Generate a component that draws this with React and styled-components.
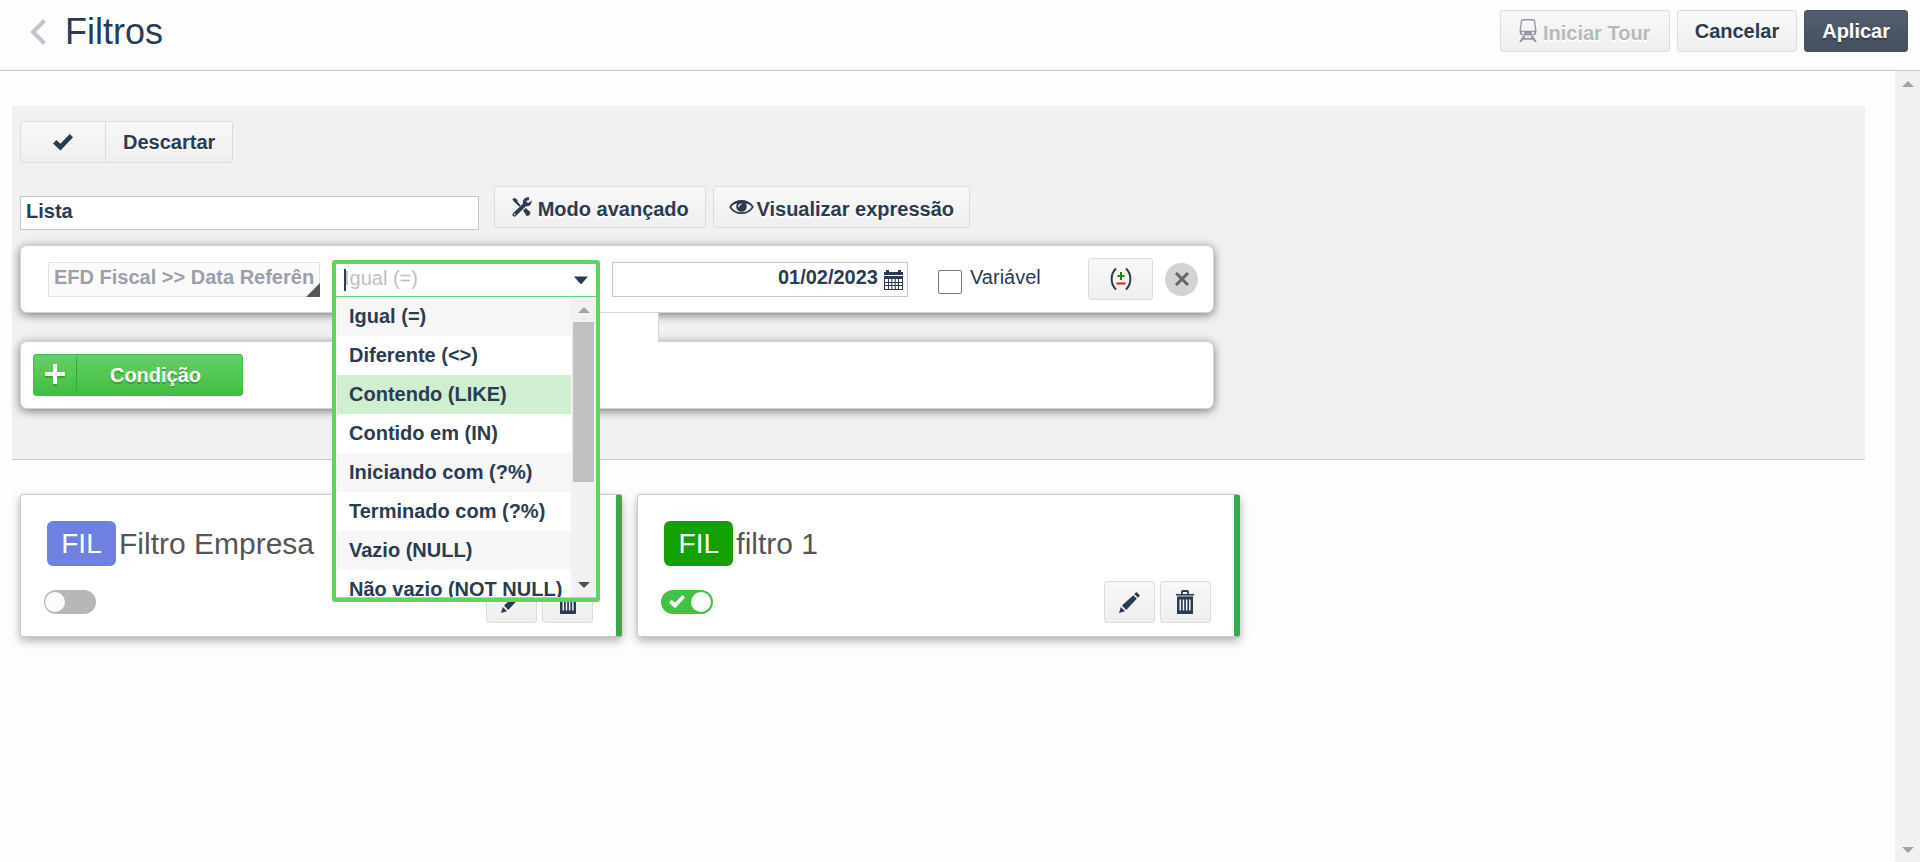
import React from 'react';
import styled, { createGlobalStyle, css } from 'styled-components';

const ink = '#2b3b50';
const green = '#66cf66';

const GlobalStyle = createGlobalStyle`
  *, *::before, *::after { box-sizing: border-box; }
  body { margin: 0; background: #fdfdfd; }
  body, button, input { font-family: "Liberation Sans", Arial, sans-serif; color: ${ink}; }
  svg { display: block; flex: none; }
`;

const Page = styled.div`
  display: flex;
  flex-direction: column;
  min-height: 100vh;
  font-size: 20px;
`;

const Header = styled.header`
  display: flex;
  align-items: flex-start;
  padding: 10px 12px 0 30px;
  height: 71px;
  border-bottom: 1px solid #c6c6c6;
`;

const BackLink = styled.a`
  padding-top: 9px;
  margin-right: 19px;
`;

const Title = styled.h1`
  margin: 0;
  font-size: 36px;
  font-weight: 400;
  line-height: 44px;
`;

const Actions = styled.div`
  display: flex;
  gap: 7px;
  margin-left: auto;
`;

const Button = styled.button`
  display: flex;
  align-items: center;
  justify-content: center;
  height: 42px;
  padding: 0 ${(p) => (p.$width ? '0' : '17px')};
  width: ${(p) => p.$width || 'auto'};
  border: 1px solid #dcdcdc;
  border-radius: 3px;
  background: linear-gradient(#f8f8f8, #efefef);
  font-size: 20px;
  font-weight: 700;
  line-height: 24px;
  white-space: nowrap;
  text-shadow: 0 2px 0 #fff;
  &:disabled { color: #b9b9bb; }
  ${(p) => p.$primary && css`
    border-color: #455161;
    background: linear-gradient(#525e70, #44505e);
    color: #fff;
    text-shadow: 0 2px 0 #333d4a;
  `}
`;

const IconLabel = styled.span`
  padding-top: 3px;
  margin-left: ${(p) => (p.$tight ? '2px' : '6px')};
`;

const Body = styled.div`
  display: flex;
  flex: 1;
`;

const Main = styled.main`
  flex: 1;
  min-width: 0;
  padding: 35px 30px 40px 12px;
`;

const Panel = styled.section`
  padding: 15px 8px 50px;
  background: #f1f1f1;
  border-bottom: 1px solid #c6c6c6;
`;

const ButtonGroup = styled.div`
  display: flex;
  & > button:first-child { border-radius: 3px 0 0 3px; }
  & > button + button { margin-left: -1px; border-radius: 0 3px 3px 0; }
`;

const NameRow = styled.div`
  display: flex;
  gap: 7px;
  height: 44px;
  margin: 23px 0 15px;
`;

const NameInput = styled.input`
  align-self: flex-end;
  width: 25%;
  height: 34px;
  margin-right: 8px;
  padding: 0 5px 4px;
  border: 1px solid #c6c6c6;
  background: #fff;
  font-size: 20px;
  font-weight: 700;
`;

const Condition = styled.div`
  display: flex;
  align-items: center;
  width: 65%;
  height: 68px;
  margin-bottom: ${(p) => (p.$last ? '0' : '28px')};
  padding: 0 15px 0 ${(p) => (p.$last ? '12px' : '27px')};
  border: 1px solid #d4d4d4;
  border-radius: 7px;
  background: #fff;
  box-shadow: 0 2px 10px rgba(0, 0, 0, 0.5);
`;

const Field = styled.div`
  position: relative;
  flex: 0 1 ${(p) => p.$basis};
  min-width: 0;
  height: 35px;
  margin-right: 12px;
`;

const FieldInput = styled.input`
  width: 100%;
  height: 35px;
  padding: 0 5px 3px;
  border: 1px solid #c6c6c6;
  background: #fff;
  font-size: 20px;
  font-weight: 700;
  text-align: ${(p) => (p.$date ? 'right' : 'left')};
  ${(p) => p.$date && css`padding-right: 29px;`}
  &:disabled {
    border-color: #e2e2e2;
    background: #fafafa;
    color: #9a9fab;
  }
`;

const Corner = styled.span`
  position: absolute;
  right: 0;
  bottom: 0;
  border: 7px solid transparent;
  border-right-color: #555;
  border-bottom-color: #555;
`;

const CalendarMark = styled.span`
  position: absolute;
  right: 5px;
  top: 8px;
`;

const Backdrop = styled.div`
  position: absolute;
  top: 51px;
  left: 0;
  width: 327px;
  height: 30px;
  border-right: 1px solid #d4d4d4;
  background: #fff;
  z-index: 1;
`;

const Combo = styled.div`
  position: absolute;
  top: -2px;
  left: 0;
  right: 0;
  z-index: 2;
  border: 4px solid ${green};
  border-radius: 3px;
  background: #fff;
`;

const ComboHead = styled.div`
  display: flex;
  align-items: center;
  height: 33px;
  padding-right: 8px;
  border-bottom: 1px solid ${green};
`;

const Caret = styled.span`
  position: absolute;
  left: 8px;
  top: 5px;
  width: 2px;
  height: 22px;
  background: ${ink};
`;

const ComboInput = styled.input`
  flex: 1;
  min-width: 0;
  height: 32px;
  padding: 0 8px 2px;
  border: 0;
  outline: 0;
  background: transparent;
  font-size: 20px;
  &::placeholder { color: #bfbfbf; opacity: 1; }
`;

const ComboBody = styled.div`
  display: flex;
  height: 301px;
  border-bottom: 1px solid #c6c6c6;
`;

const Options = styled.ul`
  flex: 1;
  margin: 0;
  padding: 0 0 0 1px;
  list-style: none;
  overflow: hidden;
`;

const Option = styled.li`
  height: 39px;
  padding: 0 12px;
  background: ${(p) => (p.$active ? '#d0efd0' : '#fff')};
  font-weight: 700;
  line-height: 38px;
  white-space: nowrap;
  &:nth-child(4n + 1) { background: #f6f6f6; }
  &:nth-child(7) { background: #f6f6f6; }
`;

const Track = styled.div`
  display: flex;
  flex: none;
  flex-direction: column;
  align-items: center;
  width: 25px;
  background: #f1f1f1;
`;

const Arrow = styled.span`
  width: 0;
  margin: 10px 0 9px;
  border: 0 solid transparent;
  border-width: 0 6px;
  ${(p) => (p.$down
    ? css`border-top: 6px solid ${p.$color}; margin-top: auto;`
    : css`border-bottom: 6px solid ${p.$color};`)}
`;

const Thumb = styled.span`
  width: 21px;
  height: 160px;
  background: #c1c1c1;
`;

const CheckLabel = styled.label`
  display: flex;
  align-items: flex-start;
  gap: 8px;
  margin-left: 18px;
  line-height: 24px;
`;

const Checkbox = styled.input`
  appearance: none;
  width: 24px;
  height: 24px;
  margin: 5px 0 0;
  border: 1px solid #777;
  border-radius: 2px;
  background: #fff;
`;

const RowTools = styled.div`
  display: flex;
  align-items: center;
  gap: 12px;
  margin-left: auto;
`;

const CloseButton = styled.button`
  display: grid;
  place-items: center;
  width: 33px;
  height: 33px;
  padding: 0;
  border: 0;
  border-radius: 50%;
  background: #d3d3d3;
`;

const AddButton = styled.button`
  display: flex;
  align-items: center;
  width: 210px;
  height: 42px;
  padding: 0;
  border: 1px solid #45bb45;
  border-radius: 3px;
  background: linear-gradient(${green}, #40bf40);
  color: #fff;
  font-size: 20px;
  font-weight: 700;
  text-shadow: 0 2px 0 #36a336;
`;

const AddIcon = styled.span`
  display: grid;
  place-items: center;
  width: 43px;
  height: 36px;
  border-right: 1px solid #36a936;
`;

const AddText = styled.span`
  flex: 1;
  padding-right: 8px;
  text-align: center;
`;

const CardGrid = styled.section`
  display: grid;
  grid-template-columns: repeat(3, 1fr);
  gap: 15px;
  padding: 34px 8px 0;
`;

const Card = styled.article`
  display: flex;
  flex-direction: column;
  justify-content: space-between;
  height: 143px;
  padding: 26px 23px 13px 23px;
  border: 1px solid #c9c9c9;
  border-right: 6px solid #37ab49;
  border-radius: 3px;
  background: #fff;
  box-shadow: 0 4px 10px rgba(0, 0, 0, 0.3);
`;

const CardTitle = styled.h2`
  display: flex;
  align-items: center;
  gap: 3px;
  margin: 0 0 0 3px;
  color: #555;
  font-size: 30px;
  font-weight: 400;
`;

const Badge = styled.span`
  width: 69px;
  border-radius: 6px;
  background: ${(p) => p.$color};
  color: #fff;
  font-size: 28px;
  line-height: 45px;
  text-align: center;
`;

const CardFoot = styled.div`
  display: flex;
  align-items: center;
  gap: 5px;
`;

const Switch = styled.label`
  position: relative;
  display: flex;
  align-items: center;
  justify-content: ${(p) => (p.$on ? 'flex-end' : 'flex-start')};
  gap: 6px;
  width: 52px;
  height: 24px;
  margin-right: auto;
  padding: 0 2px 0 1px;
  border-radius: 12px;
  background: ${(p) => (p.$on ? '#43c143' : '#b7b7b7')};
`;

const SwitchInput = styled.input`
  position: absolute;
  inset: 0;
  width: 100%;
  height: 100%;
  margin: 0;
  opacity: 0;
`;

const Knob = styled.span`
  width: 20px;
  height: 20px;
  border-radius: 50%;
  background: #fcfcfc;
`;

const ChevronIcon = () => (
  <svg width="16" height="26" viewBox="0 0 16 26" fill="none" stroke="#c1c2cc" strokeWidth="4">
    <path d="M14.5 1.5 3 13l11.500 11.500" />
  </svg>
);

const TrainIcon = () => (
  <svg width="18" height="24" viewBox="0 0 18 24" fill="#9298a5">
    <path fillRule="evenodd" d="M4 0h10c1.500 0 2 .8 2.200 2L17.500 12c.2 3-1.500 4.500-3.500 4.500H4C2 16.500.3 15 .5 12L1.800 2C2 .8 2.500 0 4 0ZM4 1.500c-.5 0-.8.3-.9.800L2 10.500c0 .8.300 1.200 1 1.200h12c.7 0 1-.4 1-1.200L14.900 2.300c-.1-.5-.4-.8-.9-.8ZM4 12.700a1.300 1.300 0 1 0 .01 0ZM14 12.700a1.300 1.300 0 1 0 .01 0Z" />
    <path d="M4 17h2.500l-1 2h7l-1-2H14l4 6h-2.500L14 20.800H4L2.500 23H0Z" />
  </svg>
);

const CheckIcon = ({ size = 20, color = ink }) => (
  <svg width={size} height={size * 0.85} viewBox="0 0 20 17" fill={color}>
    <path d="M0 9.500 3.400 6l4 3.800L16.800 0 20 3.200 7.500 16.500Z" />
  </svg>
);

const ToolsIcon = () => (
  <svg width="20" height="20" viewBox="0 0 20 20">
    <path d="M2.500 3.500 8 9M12.500 13l5 5" stroke={ink} strokeWidth="2" />
    <path d="m11.200 13.600 2.600-2.500 5 4.300-4 4.200Z" fill={ink} />
    <path d="M.3 2.600 2.400.8l3.200 2.300-.2 2.300-2.300.2Z" fill={ink} />
    <path d="M2.500 17.700 13.500 6.800" stroke={ink} strokeWidth="4" strokeLinecap="round" />
    <path d="M16.800 3.300 17.200.4C13.500-.2 10 3 11 6.500c1.500 3.500 5.700 3.600 7.700 1 .7-1 1.200-2.500.8-4l-2.400 2.200-2.400-.3-.4-1.600Z" fill={ink} />
    <circle cx="2.700" cy="17.400" r=".8" fill="#f5f5f5" />
  </svg>
);

const EyeIcon = () => (
  <svg width="25" height="16" viewBox="0 0 25 16">
    <path d="M1.200 8C6-.2 19-.2 23.800 8 19 16.200 6 16.200 1.200 8Z" fill="#f7f7f7" stroke={ink} strokeWidth="1.600" />
    <path d="M1 8C6-1 19-1 24 8 19 2.800 6 2.800 1 8Z" fill={ink} />
    <circle cx="12.500" cy="7.500" r="5.300" fill={ink} />
    <path d="M9.700 8a3 3 0 0 1 3-3" fill="none" stroke="#f7f7f7" strokeWidth="1.200" />
  </svg>
);

const CalendarIcon = () => (
  <svg width="19" height="20" viewBox="0 0 19 20">
    <path d="M0 2h2V0h3v2h9V0h3v2h2v3H0ZM0 6h19v14H0Z" fill={ink} />
    <path d="M1 9h17v10H1Z" fill="#fff" />
    <path d="M0 12.500h19M0 15.500h19M4.500 9v10M7.800 9v10M11.200 9v10M14.500 9v10" stroke={ink} strokeWidth="1" />
  </svg>
);

const DownIcon = () => (
  <svg width="14" height="8" viewBox="0 0 14 8" fill={ink}>
    <path d="M0 .5h14L7.500 8h-1Z" />
  </svg>
);

const ParenIcon = () => (
  <svg width="22" height="24" viewBox="0 0 22 24" fill="none">
    <path d="M6 1.500C.2 7 .2 17 6 22.500M16 1.500C21.800 7 21.800 17 16 22.500" stroke={ink} strokeWidth="2" />
    <path d="M11 5v8M7.500 9h7" stroke="#108a10" strokeWidth="2" />
    <path d="M6.500 16.500h9" stroke="#f11" strokeWidth="2" />
  </svg>
);

const CloseIcon = () => (
  <svg width="14" height="14" viewBox="0 0 14 14" stroke="#666" strokeWidth="3">
    <path d="m1 1 12 12M13 1 1 13" />
  </svg>
);

const PlusIcon = () => (
  <svg width="20" height="22" viewBox="0 0 20 22" strokeWidth="4">
    <path d="M10 2v20M0 12h20" stroke="#36a336" />
    <path d="M10 0v20M0 10h20" stroke="#fff" />
  </svg>
);

const PencilIcon = () => (
  <svg width="21" height="21" viewBox="0 0 21 21" fill={ink}>
    <path d="m0 21 1.800-6 4.200 4.200ZM3 13.500 14.200 3.200l3.600 3.600L7.200 18ZM15.300 2 17.500 0 21 3.500l-2.200 2.200Z" />
  </svg>
);

const TrashIcon = () => (
  <svg width="18" height="24" viewBox="0 0 18 24" fill={ink}>
    <path fillRule="evenodd" d="M5 4V2c0-1.200.7-2 2-2h4c1.300 0 2 .8 2 2v2h5v1.500H0V4Zm1.800 0h4.400V2H6.800Z" />
    <path fill="#77838c" d="M1 5.500h16V7H1Z" />
    <path fillRule="evenodd" d="M1 7h16v17H1ZM3.500 9.500v11H5v-11ZM6.700 9.500v11h1.500v-11ZM9.900 9.500v11h1.500v-11ZM13.100 9.500v11h1.500v-11Z" />
  </svg>
);

const operators = [
  'Igual (=)',
  'Diferente (<>)',
  'Contendo (LIKE)',
  'Contido em (IN)',
  'Iniciando com (?%)',
  'Terminado com (?%)',
  'Vazio (NULL)',
  'Não vazio (NOT NULL)',
];

const filters = [
  { name: 'Filtro Empresa', color: '#6f80e0', on: false },
  { name: 'filtro 1', color: '#14a000', on: true },
];

function OperatorCombo() {
  return (
    <Field $basis="268px">
      <Backdrop />
      <Combo>
        <ComboHead>
          <Caret />
          <ComboInput
            role="combobox"
            aria-label="Operador"
            aria-expanded="true"
            aria-controls="operators"
            placeholder="Igual (=)"
          />
          <DownIcon />
        </ComboHead>
        <ComboBody>
          <Options id="operators" role="listbox">
            {operators.map((op, i) => (
              <Option key={op} role="option" aria-selected={i === 2} $active={i === 2}>{op}</Option>
            ))}
          </Options>
          <Track>
            <Arrow $color="#a3a3a3" />
            <Thumb />
            <Arrow $down $color="#505050" />
          </Track>
        </ComboBody>
      </Combo>
    </Field>
  );
}

function FilterCard({ name, color, on }) {
  return (
    <Card>
      <CardTitle><Badge $color={color}>FIL</Badge>{name}</CardTitle>
      <CardFoot>
        <Switch $on={on}>
          <SwitchInput type="checkbox" role="switch" aria-label={name} defaultChecked={on} />
          {on && <CheckIcon size={16} color="#fff" />}
          <Knob />
        </Switch>
        <Button $width="51px" aria-label="Editar"><PencilIcon /></Button>
        <Button $width="51px" aria-label="Excluir"><TrashIcon /></Button>
      </CardFoot>
    </Card>
  );
}

export default function App() {
  return (
    <Page>
      <GlobalStyle />
      <Header>
        <BackLink href="#" aria-label="Voltar"><ChevronIcon /></BackLink>
        <Title>Filtros</Title>
        <Actions>
          <Button disabled $width="170px"><TrainIcon /><IconLabel>Iniciar Tour</IconLabel></Button>
          <Button>Cancelar</Button>
          <Button $primary>Aplicar</Button>
        </Actions>
      </Header>
      <Body>
        <Main>
          <Panel>
            <ButtonGroup>
              <Button $width="86px" aria-label="Confirmar"><CheckIcon /></Button>
              <Button>Descartar</Button>
            </ButtonGroup>
            <NameRow>
              <NameInput aria-label="Nome" defaultValue="Lista" />
              <Button $width="212px"><ToolsIcon /><IconLabel>Modo avançado</IconLabel></Button>
              <Button $width="257px"><EyeIcon /><IconLabel $tight>Visualizar expressão</IconLabel></Button>
            </NameRow>
            <Condition>
              <Field $basis="272px">
                <FieldInput disabled aria-label="Campo" defaultValue="EFD Fiscal >> Data Referência" />
                <Corner />
              </Field>
              <OperatorCombo />
              <Field $basis="296px">
                <FieldInput $date aria-label="Data" defaultValue="01/02/2023" />
                <CalendarMark><CalendarIcon /></CalendarMark>
              </Field>
              <CheckLabel><Checkbox type="checkbox" />Variável</CheckLabel>
              <RowTools>
                <Button $width="65px" aria-label="Parênteses"><ParenIcon /></Button>
                <CloseButton aria-label="Remover"><CloseIcon /></CloseButton>
              </RowTools>
            </Condition>
            <Condition $last>
              <AddButton>
                <AddIcon><PlusIcon /></AddIcon>
                <AddText>Condição</AddText>
              </AddButton>
            </Condition>
          </Panel>
          <CardGrid>
            {filters.map((f) => <FilterCard key={f.name} {...f} />)}
          </CardGrid>
        </Main>
        <Track>
          <Arrow $color="#a3a3a3" />
          <Arrow $down $color="#a3a3a3" />
        </Track>
      </Body>
    </Page>
  );
}
